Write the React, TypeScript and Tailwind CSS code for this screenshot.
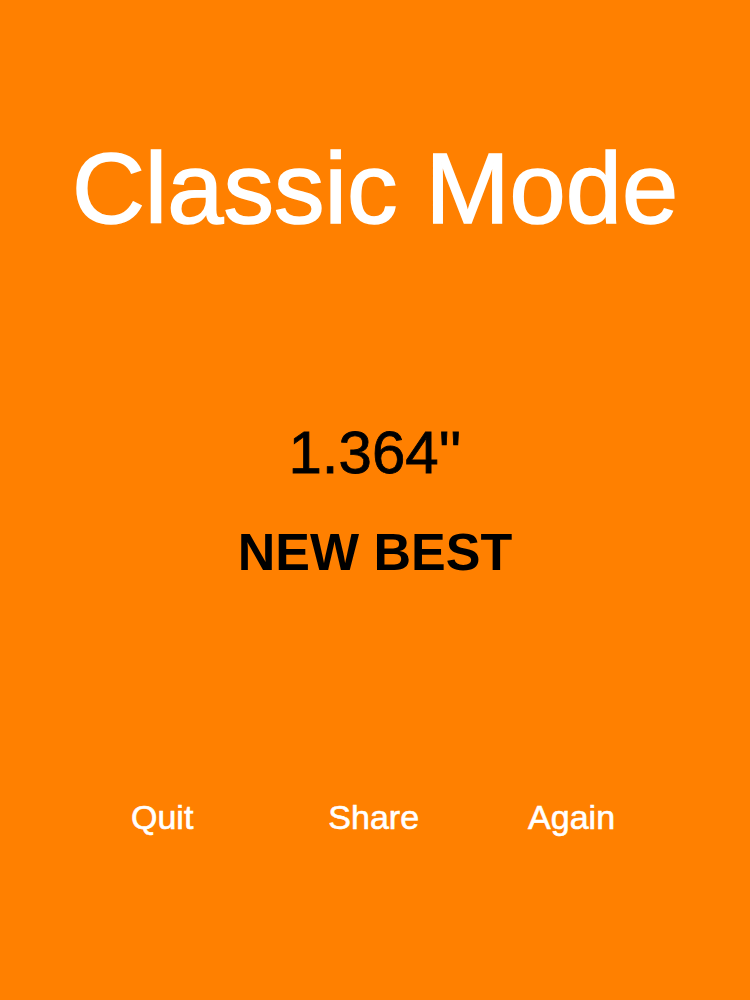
export default function App() {
  return (
    <div
      className="w-[750px] h-[1000px] bg-[#ff8000] flex flex-col items-center overflow-hidden"
      style={{ fontFamily: '"Liberation Sans", Arial, sans-serif' }}
    >
      {/* Title */}
      <h1 className="mt-[138px] text-[101px] leading-none text-white [-webkit-text-stroke:1.6px_white]">
        Classic Mode
      </h1>

      {/* Result */}
      <div className="mt-[184px] text-[60px] leading-none text-black [-webkit-text-stroke:0.8px_black]">
        1.364''
      </div>
      <div className="mt-[43px] text-[52px] leading-none font-bold text-black">NEW BEST</div>

      {/* Actions */}
      <div className="mt-[222px] w-full flex pl-[131px] text-[34px] leading-none text-white [-webkit-text-stroke:0.6px_white]">
        <button className="leading-none">Quit</button>
        <button className="ml-[135px] leading-none">Share</button>
        <button className="ml-[109px] leading-none">Again</button>
      </div>
    </div>
  );
}
